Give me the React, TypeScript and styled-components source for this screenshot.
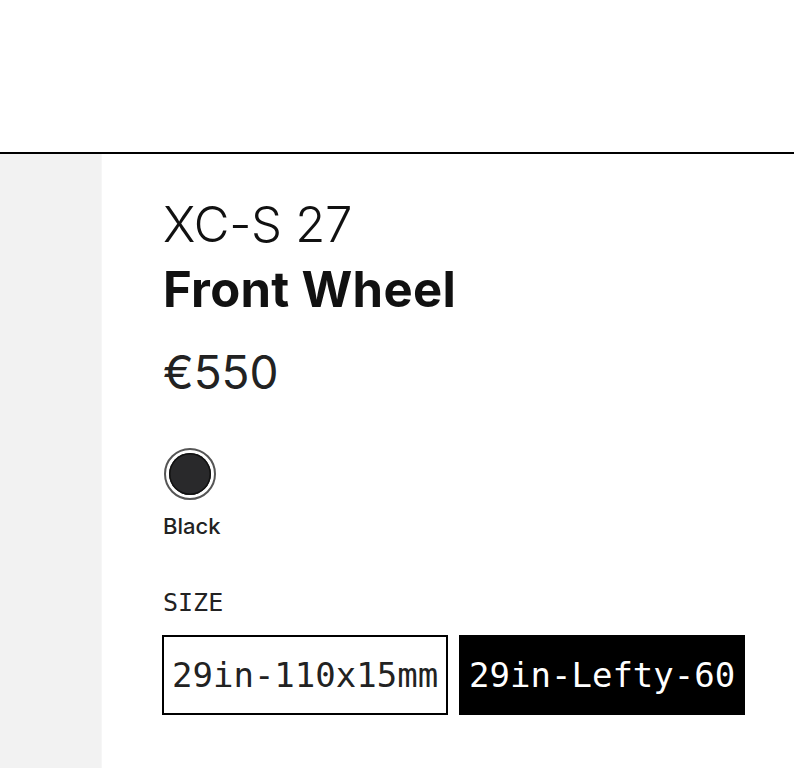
import React, { useState } from 'react';
import styled, { createGlobalStyle } from 'styled-components';

const GlobalStyle = createGlobalStyle`
  html, body {
    margin: 0;
    padding: 0;
    background: #ffffff;
  }
  body {
    font-family: Inter, "Liberation Sans", sans-serif;
    color: #111;
  }
`;

const sizes = ['29in-110x15mm', '29in-Lefty-60'];

const App = () => {
  const [selected, setSelected] = useState(1);

  return (
    <>
      <GlobalStyle />
      <Page>
        <TopBar />
        <Main>
          <Gallery />
          <Details>
            <Title>
              <Model>XC-S 27</Model>
              <Name>Front Wheel</Name>
            </Title>
            <Price>€550</Price>

            <Swatches>
              <Swatch>
                <SwatchRing>
                  <SwatchDot color="#29292b" />
                </SwatchRing>
                <SwatchLabel>Black</SwatchLabel>
              </Swatch>
            </Swatches>

            <SizeLabel>SIZE</SizeLabel>
            <SizeRow>
              {sizes.map((s, i) => (
                <SizeButton key={s} active={i === selected} onClick={() => setSelected(i)}>
                  {s}
                </SizeButton>
              ))}
            </SizeRow>
          </Details>
        </Main>
      </Page>
    </>
  );
};

const Page = styled.div`
  width: 794px;
  height: 768px;
  display: flex;
  flex-direction: column;
  overflow: hidden;
`;

const TopBar = styled.div`
  height: 152px;
  flex-shrink: 0;
  border-bottom: 2px solid #000;
  background: #fff;
`;

const Main = styled.div`
  flex: 1;
  display: flex;
`;

const Gallery = styled.div`
  width: 101px;
  flex-shrink: 0;
  background: #f2f2f2;
  border-right: 1px solid #f6f6f6;
`;

const Details = styled.div`
  flex: 1;
  padding: 38px 0 0 60px;
  display: flex;
  flex-direction: column;
  align-items: flex-start;
`;

const Title = styled.h1`
  margin: 0;
  font-size: 49px;
  line-height: 65px;
  letter-spacing: -0.3px;
`;

const Model = styled.span`
  display: block;
  padding-left: 1px;
  font-weight: 300;
`;

const Name = styled.span`
  display: block;
  padding-left: 1px;
  font-weight: 700;
  letter-spacing: 0.3px;
`;

const Price = styled.div`
  margin-top: 20px;
  padding-left: 1px;
  font-size: 46px;
  line-height: 60px;
  font-weight: 400;
  color: #222;
`;

const Swatches = styled.div`
  margin-top: 46px;
  display: flex;
  gap: 16px;
`;

const Swatch = styled.div`
  display: flex;
  flex-direction: column;
  align-items: flex-start;
`;

const SwatchRing = styled.div`
  width: 52px;
  height: 52px;
  margin-left: 2px;
  box-sizing: border-box;
  border: 2px solid #555;
  border-radius: 50%;
  display: flex;
  align-items: center;
  justify-content: center;
`;

const SwatchDot = styled.div<{ color: string }>`
  width: 42px;
  height: 42px;
  border-radius: 50%;
  background: ${p => p.color};
  box-shadow: inset 0 0 0 1.5px #111;
`;

const SwatchLabel = styled.div`
  margin-top: 12px;
  padding-left: 1px;
  font-size: 22px;
  line-height: 28px;
  font-weight: 500;
  color: #222;
`;

const SizeLabel = styled.div`
  margin-top: 48px;
  padding-left: 1px;
  font-family: "DejaVu Sans Mono", "Liberation Mono", monospace;
  font-size: 25px;
  line-height: 30px;
  color: #222;
`;

const SizeRow = styled.div`
  margin-top: 17px;
  display: flex;
  gap: 11px;
`;

const SizeButton = styled.button<{ active?: boolean }>`
  height: 80px;
  padding: 0 8px;
  border: 2px solid #000;
  background: ${p => (p.active ? '#000' : '#fff')};
  color: ${p => (p.active ? '#fff' : '#222')};
  font-family: "DejaVu Sans Mono", "Liberation Mono", monospace;
  font-size: 34px;
  cursor: pointer;
  display: flex;
  align-items: center;
`;

export default App;
